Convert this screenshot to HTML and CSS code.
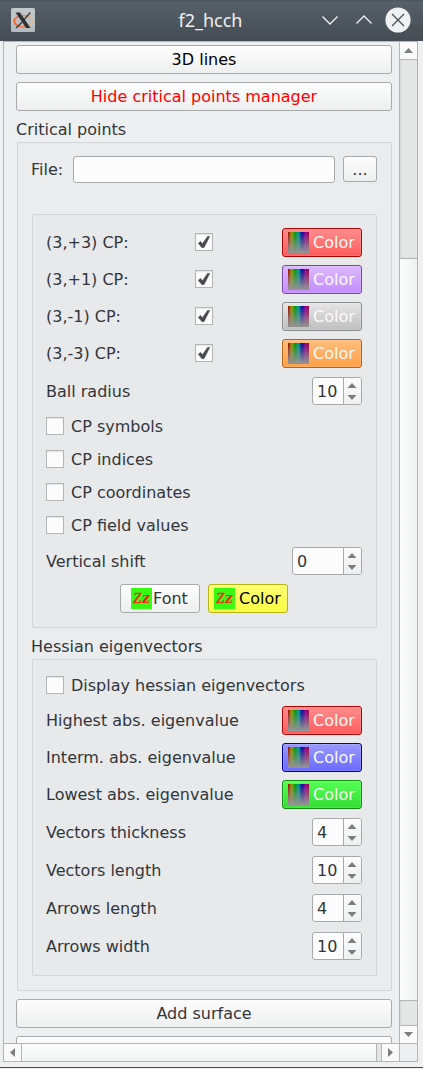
FILE: index.html
```html
<!DOCTYPE html>
<html lang="en">
<head>
<meta charset="utf-8">
<title>f2_hcch</title>
<link rel="stylesheet" href="styles.css">
</head>
<body>
<div class="window">
  <header class="titlebar">
    <svg class="app-icon" width="24" height="24" viewBox="0 0 24 24">
      <defs>
        <linearGradient id="tile" x1="0" y1="0" x2="0" y2="1"><stop offset="0" stop-color="#c3c9cd"/><stop offset="1" stop-color="#b4bbc0"/></linearGradient>
        <linearGradient id="ring" x1="0" y1="0" x2="1" y2="0"><stop offset="0" stop-color="#fb5a20"/><stop offset=".45" stop-color="#ee8050"/><stop offset="1" stop-color="#dcc28e"/></linearGradient>
      </defs>
      <rect width="24" height="24" rx="1.5" fill="url(#tile)"/>
      <ellipse cx="12.3" cy="13.2" rx="9" ry="5.7" fill="none" stroke="url(#ring)" stroke-width="1.6"/>
      <path d="M4.5 4.5H9L19.5 20H15Z" fill="#303336"/>
      <path d="M19.3 4.5L13.2 11.5M11 14.2L5 20" stroke="#303336" stroke-width="1.2"/>
    </svg>
    <span class="title">f2_hcch</span>
    <svg class="controls" width="100" height="41" viewBox="0 0 100 41" fill="none">
      <path d="M3.5 16.5l7.5 7.5l7.5-7.5M37.5 23.5l7.5-7.5l7.5 7.5" stroke="#eff0f1" stroke-width="1.3"/>
      <circle cx="79" cy="20" r="12.6" fill="#eff0f1"/>
      <path d="M73 14l12 12M85 14l-12 12" stroke="#475057" stroke-width="1.3"/>
    </svg>
  </header>

  <div class="frame">
    <main class="viewport">
      <div class="button wide black">3D lines</div>
      <div class="button wide red-text">Hide critical points manager</div>
      <div class="heading">Critical points</div>
      <section class="group outer">
        <div class="file-row"><span class="file-label">File:</span><div class="field"></div><div class="button browse">...</div></div>

        <section class="group inner points">
          <div class="color-row"><span class="name">(3,+3) CP:</span><i class="check on"><svg viewBox="0 0 16 16"><path d="M2.3 9.2L4.5 7.4L6.4 9.8L11.6 2.4H13.7L8 13.6H5.8Z"/></svg></i><div class="button color red"><i class="spectrum"></i>Color</div></div>
          <div class="color-row"><span class="name">(3,+1) CP:</span><i class="check on"><svg viewBox="0 0 16 16"><path d="M2.3 9.2L4.5 7.4L6.4 9.8L11.6 2.4H13.7L8 13.6H5.8Z"/></svg></i><div class="button color violet"><i class="spectrum"></i>Color</div></div>
          <div class="color-row"><span class="name">(3,-1) CP:</span><i class="check on"><svg viewBox="0 0 16 16"><path d="M2.3 9.2L4.5 7.4L6.4 9.8L11.6 2.4H13.7L8 13.6H5.8Z"/></svg></i><div class="button color grey"><i class="spectrum"></i>Color</div></div>
          <div class="color-row"><span class="name">(3,-3) CP:</span><i class="check on"><svg viewBox="0 0 16 16"><path d="M2.3 9.2L4.5 7.4L6.4 9.8L11.6 2.4H13.7L8 13.6H5.8Z"/></svg></i><div class="button color orange"><i class="spectrum"></i>Color</div></div>
          <div class="spin-row radius"><span class="label">Ball radius</span><div class="spin"><span>10</span><svg width="18" height="26"><path d="M3.5 10L8 5L12.5 10ZM3.5 17L8 22L12.5 17Z"/></svg></div></div>
          <div class="check-row"><i class="check"></i>CP symbols</div>
          <div class="check-row"><i class="check"></i>CP indices</div>
          <div class="check-row"><i class="check"></i>CP coordinates</div>
          <div class="check-row"><i class="check"></i>CP field values</div>
          <div class="spin-row shift"><span class="label">Vertical shift</span><div class="spin large"><span>0</span><svg width="18" height="26"><path d="M3.5 10L8 5L12.5 10ZM3.5 17L8 22L12.5 17Z"/></svg></div></div>
          <div class="font-row">
            <div class="button font"><i class="zz"><b>Z</b><b>z</b></i>Font</div>
            <div class="button color yellow"><i class="zz"><b>Z</b><b>z</b></i>Color</div>
          </div>
        </section>

        <div class="subheading">Hessian eigenvectors</div>
        <section class="group inner hessian">
          <div class="check-row display"><i class="check"></i>Display hessian eigenvectors</div>
          <div class="color-row"><span>Highest abs. eigenvalue</span><div class="button color red"><i class="spectrum"></i>Color</div></div>
          <div class="color-row"><span>Interm. abs. eigenvalue</span><div class="button color blue"><i class="spectrum"></i>Color</div></div>
          <div class="color-row"><span>Lowest abs. eigenvalue</span><div class="button color green"><i class="spectrum"></i>Color</div></div>
          <div class="spin-row first"><span class="label">Vectors thickness</span><div class="spin"><span>4</span><svg width="18" height="26"><path d="M3.5 10L8 5L12.5 10ZM3.5 17L8 22L12.5 17Z"/></svg></div></div>
          <div class="spin-row"><span class="label">Vectors length</span><div class="spin"><span>10</span><svg width="18" height="26"><path d="M3.5 10L8 5L12.5 10ZM3.5 17L8 22L12.5 17Z"/></svg></div></div>
          <div class="spin-row"><span class="label">Arrows length</span><div class="spin"><span>4</span><svg width="18" height="26"><path d="M3.5 10L8 5L12.5 10ZM3.5 17L8 22L12.5 17Z"/></svg></div></div>
          <div class="spin-row"><span class="label">Arrows width</span><div class="spin"><span>10</span><svg width="18" height="26"><path d="M3.5 10L8 5L12.5 10ZM3.5 17L8 22L12.5 17Z"/></svg></div></div>
        </section>
      </section>
      <div class="button wide">Add surface</div>
      <div class="button wide"></div>
    </main>
    <div class="vbar">
      <div class="arrow"><svg width="17" height="17"><path d="M4 11L8.5 6L13 11Z"/></svg></div>
      <div class="groove"></div>
      <div class="handle"></div>
      <div class="groove tail"></div>
      <div class="arrow down"><svg width="17" height="17"><path d="M4 6L8.5 11L13 6Z"/></svg></div>
    </div>
    <div class="hbar">
      <div class="arrow left"><svg width="17" height="17"><path d="M11 4L6 8.5L11 13Z"/></svg></div>
      <div class="hhandle"></div>
      <div class="hgroove"></div>
      <div class="arrow right"><svg width="17" height="17"><path d="M6 4L11 8.5L6 13Z"/></svg></div>
    </div>
    <div class="corner"></div>
  </div>
  <footer class="edge"></footer>
</div>
</body>
</html>
```
FILE: styles.css
```css
* { box-sizing: border-box; }
body { margin: 0; background: #eff0f1; }
.window {
  width: 423px; height: 1069px; overflow: hidden;
  display: flex; flex-direction: column;
  font: 16px/20px "DejaVu Sans", sans-serif; color: #31363b;
  background: #eff0f1;
}
.titlebar {
  height: 41px; flex: none; display: grid; align-items: center;
  grid-template-columns: 100px 1fr 100px;
  background: linear-gradient(#4b555c 0, #566068 2px, #454c53 100%);
  padding-right: 4px;
}
.app-icon { margin-left: 11px; margin-top: -1px; }
.title { font: 18px/24px "Noto Sans", sans-serif; color: #eff0f1; text-align: center; padding: 0 0 2px 2px; }
.frame {
  margin-left: 3px; width: 415px; height: 1021px; flex: none;
  border: 1px solid #b3b5b6;
  display: grid; grid-template-columns: 395px 18px; grid-template-rows: 1001px 18px;
}
.viewport {
  height: 1001px; overflow: hidden; padding: 3px 7px 0 12px;
  display: flex; flex-direction: column;
  background: #eeeff1;
}
.button {
  height: 29px; flex: none; border: 1px solid #a7a9aa; border-radius: 3px;
  display: flex; align-items: center; justify-content: center;
  background: linear-gradient(#fdfdfd, #eeefef);
  white-space: nowrap;
}
.wide { width: 376px; margin-bottom: 8px; }
.black { color: #000; }
.red-text { color: #ff0000; }
.heading { height: 23px; line-height: 22px; flex: none; }
.group { border: 1px solid #d3d5d6; border-radius: 2px; flex: none; }
.outer { margin: 0 0 8px 1px; width: 375px; height: 849px; padding: 13px 14px; background: #ebecee; }
.inner { width: 345px; padding: 13px 14px; background: #e8e9eb; }
.file-row { display: flex; height: 58px; align-items: flex-start; margin-left: -1px; }
.file-label { width: 42px; line-height: 27px; }
.field { width: 262px; height: 27px; border: 1px solid #a7a9aa; border-radius: 3px; background: #fcfcfc; }
.browse { width: 34px; height: 26px; margin-left: 8px; padding-top: 2px; }
.points { height: 414px; }
.hessian { height: 317px; }
.inner > div { margin-left: -1px; width: 316px; }
.color-row { height: 29px; margin-bottom: 8px; display: flex; align-items: center; justify-content: space-between; }
.name { width: 149px; }
.color-row .color { margin-left: auto; }
.color { width: 80px; padding-left: 5px; gap: 4px; justify-content: flex-start; color: #fafafa; box-shadow: inset 0 0 0 1px #ffffff25; }
.red { border-color: #b40000; background: linear-gradient(#ff8d8d, #ff5c5c); }
.violet { border-color: #7746ad; background: linear-gradient(#dcb9ff, #c48cff); }
.grey { border-color: #8d8d8d; background: linear-gradient(#e5e5e5, #bfbfbf); }
.orange { border-color: #b46414; background: linear-gradient(#ffbd7d, #ffa046); }
.blue { border-color: #0000ae; background: linear-gradient(#9999ff, #6a6aff); }
.green { border-color: #128c12; background: linear-gradient(#54ff54, #35dd35); }
.yellow { color: #000; border-color: #b4b414; background: linear-gradient(#ffff71, #fbfb43); }
.spectrum {
  width: 21px; height: 21px; flex: none;
  background:
    linear-gradient(#80808000, #929292 95%),
    linear-gradient(90deg, #990000, #999900 17%, #009900 33%, #009999 50%, #000099 67%, #990099 83%, #990033);
}
.check {
  width: 18px; height: 18px; flex: none; border: 1px solid #b3b5b6; background: #fcfcfc;
  box-shadow: inset 0 1px 1px #e4e5e6; display: block;
}
.check.on { margin-bottom: 1px; }
.check svg { width: 16px; height: 16px; display: block; fill: #474a4e; stroke: #474a4e; stroke-width: .6; stroke-linejoin: round; }
.spin-row { height: 28px; margin-bottom: 10px; display: flex; align-items: center; justify-content: space-between; }
.label { padding-top: 2px; }
.radius { margin-top: 9px; margin-bottom: 12px; }
.first { margin-top: 9px; }
.spin {
  width: 50px; height: 28px; border: 1px solid #a7a9aa; border-radius: 3px;
  display: flex; background: #fcfcfc; line-height: 26px; overflow: hidden;
}
.spin span { flex: 1; padding: 1px 0 0 4px; }
.spin svg { border-left: 1px solid #a7a9aa; background: linear-gradient(#fcfcfc, #eeefef); fill: #7b7e80; }
.large { width: 70px; }
.check-row { height: 18px; padding-top: 2px; margin-bottom: 15px; display: flex; align-items: center; gap: 7px; }
.check-row .check { margin-top: -2px; }
.shift { margin-top: -2px; margin-bottom: 9px; }
.font-row { display: flex; gap: 8px; padding-left: 74px; }
.font { width: 80px; padding-left: 10px; gap: 1px; justify-content: flex-start; }
.zz {
  width: 21px; height: 21px; flex: none; background: #38fb12; color: #ee2414;
  display: flex; align-items: baseline; overflow: hidden; padding-left: 2px;
  font: italic 15px/20px "Liberation Serif", serif;
}
.zz b:last-child { font-size: 17px; margin-left: 2px; transform: scaleX(1.2); }
.zz b:first-child { font-weight: normal; -webkit-text-stroke: .4px #ee2414; }
.yellow .zz { color: #e33a12; }
.subheading { height: 31px; line-height: 38px; margin-left: -1px; }
.display { margin: 3px 0 12px; }
.vbar { display: flex; flex-direction: column; border-left: 1px solid #b3b5b6; }
.arrow { width: 17px; height: 18px; flex: none; background: #fafafa; border-bottom: 1px solid #b3b5b6; }
.arrow svg { display: block; fill: #7b7e80; }
.groove { height: 199px; flex: none; background: #e5e7e7; box-shadow: inset 1px 0 2px #d5d7d7; border-bottom: 1px solid #b3b5b6; }
.handle { height: 742px; flex: none; background: linear-gradient(90deg, #fdfdfd, #eff0f0); border-bottom: 1px solid #b3b5b6; }
.tail { height: 25px; }
.down { height: 17px; border-bottom: 0; }
.hbar { display: flex; border-top: 1px solid #b3b5b6; background: #e4e6e6; }
.left { width: 18px; height: 17px; border-bottom: 0; border-right: 1px solid #b3b5b6; }
.hhandle { width: 355px; background: linear-gradient(#fdfdfd, #f0f1f1); border-right: 1px solid #b3b5b6; }
.hgroove { width: 5px; border-right: 1px solid #b3b5b6; }
.right { height: 17px; border-bottom: 0; }
.corner { border-top: 1px solid #b3b5b6; border-left: 1px solid #b3b5b6; background: #eeeff1; }
.edge { margin-top: 5px; height: 2px; border-top: 1px solid #454c53; background: #eff0f1; }
```
